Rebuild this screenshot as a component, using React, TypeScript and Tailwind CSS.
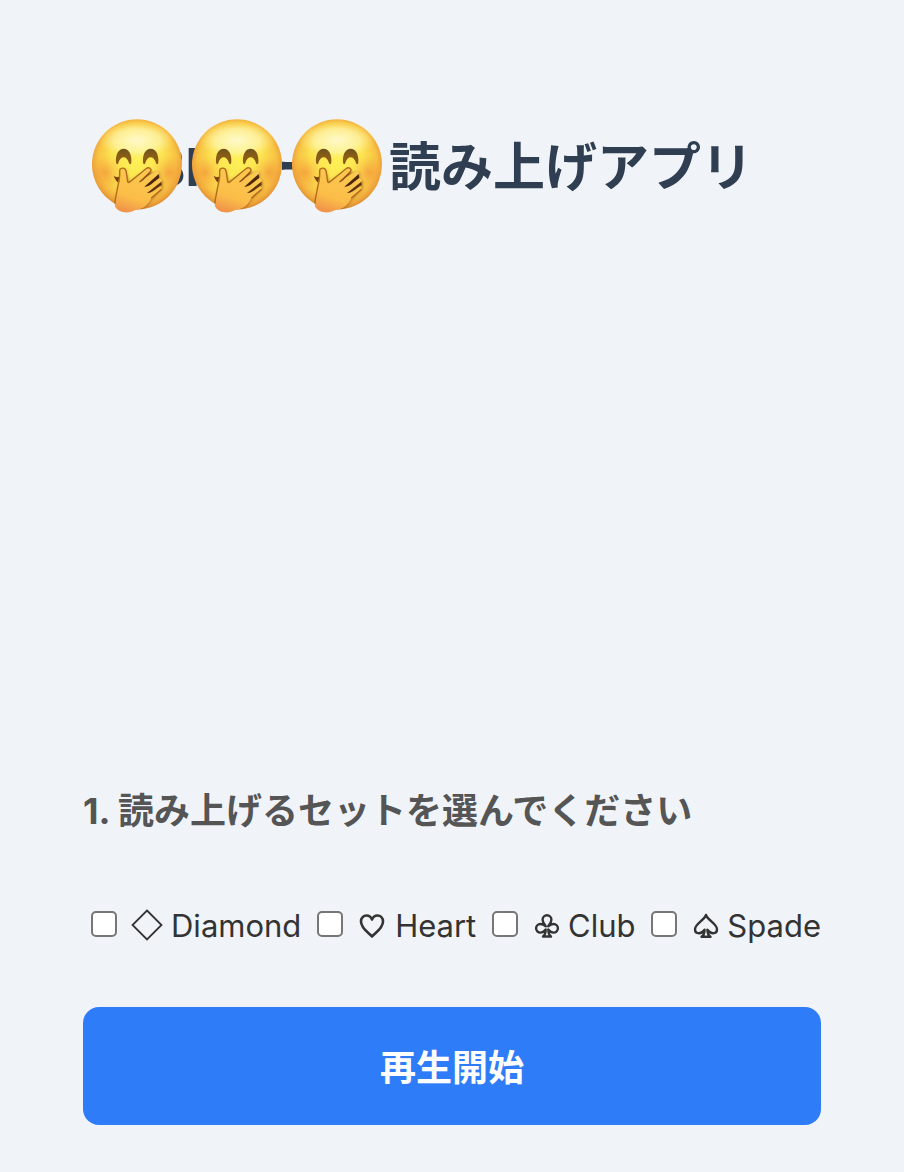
import { FC, ReactNode } from 'react'

interface CardSet {
  id: string
  name: string
  icon: ReactNode
}

const cardSets: CardSet[] = [
  {
    id: 'diamond',
    name: 'Diamond',
    icon: (
      <svg viewBox="0 0 32 32" className="ml-3.5 mr-2 mt-0.5 size-8 shrink-0" aria-hidden="true">
        <path d="M16 1.5 30.5 16 16 30.5 1.5 16Z" fill="none" stroke="currentColor" strokeWidth="1.8" />
      </svg>
    ),
  },
  {
    id: 'heart',
    name: 'Heart',
    icon: (
      <svg viewBox="0 0 26 26" className="ml-4 mr-2.5 mt-1 size-[26px] shrink-0" aria-hidden="true">
        <path
          d="M13 23.5C10 20 2 15.5 2 8.500C2 5 4.500 2.500 7.500 2.500C10 2.500 12 4 13 6.500C14 4 16 2.500 18.500 2.500C21.500 2.500 24 5 24 8.500C24 15.500 16 20 13 23.500Z"
          fill="none"
          stroke="currentColor"
          strokeWidth="2.6"
          strokeLinejoin="round"
        />
      </svg>
    ),
  },
  {
    id: 'club',
    name: 'Club',
    icon: (
      <svg viewBox="0 0 26 26" className="ml-4 mr-2 mt-1 size-[26px] shrink-0" aria-hidden="true">
        <path
          d="M11.800 13.200C10.500 11.500 8.600 9.500 8.600 6.700A4.400 4.400 0 0 1 17.400 6.700C17.400 9.500 15.500 11.500 14.200 13.200C16 11.800 17.500 11 19.600 11A4.300 4.300 0 0 1 19.600 19.600C17.300 19.600 15.500 18 14.300 16.500C14.300 20 14.800 22 17 23.500H9C11.200 22 11.700 20 11.700 16.500C10.500 18 8.700 19.600 6.400 19.600A4.300 4.300 0 0 1 6.400 11C8.500 11 10 11.800 11.800 13.200Z"
          fill="none"
          stroke="currentColor"
          strokeWidth="2.4"
          strokeLinejoin="round"
        />
      </svg>
    ),
  },
  {
    id: 'spade',
    name: 'Spade',
    icon: (
      <svg viewBox="0 0 26 26" className="ml-4 mr-2 mt-1 size-[26px] shrink-0" aria-hidden="true">
        <path
          d="M13 2C15 7.500 24 11 24 16.200C24 18.800 22.200 20.200 20 20.200C17.500 20.200 15.700 18.700 14.400 16.800C14.400 20.200 15 22.200 17.500 23.800H8.500C11 22.200 11.600 20.200 11.600 16.800C10.300 18.700 8.500 20.200 6 20.200C3.800 20.200 2 18.800 2 16.200C2 11 11 7.500 13 2Z"
          fill="none"
          stroke="currentColor"
          strokeWidth="2.4"
          strokeLinejoin="round"
        />
      </svg>
    ),
  },
]

const GiggleFace: FC = () => (
  <svg viewBox="21 25 300 288" className="h-24 w-[100px] shrink-0" aria-hidden="true">
    <use href="#giggle-face" />
  </svg>
)

const GiggleFaceDefs: FC = () => (
  <svg className="absolute size-0" aria-hidden="true">
    <defs>
      <radialGradient id="face-fill" gradientUnits="userSpaceOnUse" cx="171" cy="154" r="146">
        <stop offset="0" stopColor="#fdf056" />
        <stop offset="0.55" stopColor="#fce250" />
        <stop offset="0.8" stopColor="#f8c444" />
        <stop offset="0.93" stopColor="#eda23a" />
        <stop offset="1" stopColor="#d98a2e" />
      </radialGradient>
      <radialGradient id="face-shine">
        <stop offset="0" stopColor="#fffbd8" stopOpacity="0.9" />
        <stop offset="0.6" stopColor="#fff9b8" stopOpacity="0.65" />
        <stop offset="1" stopColor="#fff176" stopOpacity="0" />
      </radialGradient>
      <radialGradient id="cheek-fill">
        <stop offset="0" stopColor="#f08334" stopOpacity="0.55" />
        <stop offset="1" stopColor="#f59a3b" stopOpacity="0" />
      </radialGradient>
      <linearGradient id="eye-fill" x1="0" y1="0" x2="0" y2="1">
        <stop offset="0" stopColor="#6e5220" />
        <stop offset="0.5" stopColor="#8a5d14" />
        <stop offset="1" stopColor="#8a5a1c" />
      </linearGradient>
      <linearGradient id="hand-fill" gradientUnits="userSpaceOnUse" x1="185" y1="185" x2="145" y2="308">
        <stop offset="0" stopColor="#fbc850" />
        <stop offset="0.65" stopColor="#fbbd48" />
        <stop offset="1" stopColor="#f0944a" />
      </linearGradient>
      <filter id="soft" x="-20%" y="-20%" width="140%" height="140%">
        <feGaussianBlur stdDeviation="4" />
      </filter>
      <clipPath id="face-clip">
        <circle cx="171" cy="164" r="135" />
      </clipPath>
      <g id="giggle-face">
        <circle cx="171" cy="164" r="135" fill="url(#face-fill)" />
        <ellipse cx="171" cy="92" rx="116" ry="58" fill="url(#face-shine)" />
        <g clipPath="url(#face-clip)">
          <circle cx="76" cy="188" r="52" fill="url(#cheek-fill)" />
          <circle cx="266" cy="188" r="52" fill="url(#cheek-fill)" />
        </g>
        <path d="M108 158C106 134 116 117 131 117S156 134 154 158C153 165 149 166 147 160C141 137 121 137 115 160C113 166 109 165 108 158Z" fill="url(#eye-fill)" />
        <path d="M189 158C187 134 197 117 212 117S237 134 235 158C234 165 230 166 228 160C222 137 202 137 196 160C194 166 190 165 189 158Z" fill="url(#eye-fill)" />
        <path d="M101 198C107 203 116 203 122 199L119 223C112 218 104 209 101 198Z" fill="#7a430f" />
        <g clipPath="url(#face-clip)">
          <path
            d="M119 186C119 173 136 171 138 185L144 213L201 175C208 171 215 179 209 186L230 183C237 182 241 191 234 197L243 208C249 212 247 219 242 222C249 226 247 235 239 240L211 267C202 285 188 299 150 306C106 310 100 288 106 268L112 239C117 219 119 206 119 186Z"
            fill="#a8611c"
            opacity="0.8"
            filter="url(#soft)"
            transform="translate(2 5)"
          />
        </g>
        <path
          d="M119 186C118 174 134 171 138 184L143 216C145 221 149 218 153 214L198 177C207 170 217 178 211 187L192 207L225 186C235 181 241 190 235 198L209 222L235 207C244 203 249 212 242 219L216 240L235 230C243 227 248 234 243 240L215 264C203 287 190 298 166 301C145 314 116 309 106 292C101 281 109 258 111 238C114 220 120 208 119 186Z"
          fill="url(#hand-fill)"
        />
        <path
          d="M105 280C105 268 110 252 112 238C115 221 121 206 119 186C118 174 134 171 138 184L143 216C145 221 149 218 153 214L198 177C207 170 217 178 211 187"
          fill="none"
          stroke="#b06c1c"
          strokeWidth="4"
          strokeLinecap="round"
        />
        <path d="M211 184L176 218C183 219 189 212 195 206L210 191Z" fill="#8f4c12" />
        <path d="M236 193L193 231C202 233 214 225 221 218L238 204Z" fill="#4d270a" />
        <path d="M244 216L201 250C210 251 220 245 228 238L245 226Z" fill="#5e330e" />
        <path d="M243 240L215 264" fill="none" stroke="#b56718" strokeWidth="4" strokeLinecap="round" />
      </g>
    </defs>
  </svg>
)

const App: FC = () => {
  return (
    <main className="min-h-screen bg-[#f0f4f9] px-[83px] pb-[47px] pt-[130px] font-[Inter,'Noto_Sans_CJK_JP',sans-serif] text-[#333]">
      <GiggleFaceDefs />
      <header className="relative">
        <h1 className="whitespace-nowrap text-center text-[52px] font-bold leading-[76px] text-[#2f3e50]">
          BNカード&thinsp;読み上げアプリ
        </h1>
        <div className="absolute -top-3 left-1 flex">
          <GiggleFace />
          <GiggleFace />
          <GiggleFace />
        </div>
      </header>

      <section className="mt-[579px]">
        <h2 className="whitespace-nowrap text-4xl font-bold leading-[52px] text-[#555]">
          1. 読み上げるセットを選んでください
        </h2>
        <div className="mt-[65px] flex items-center justify-between pl-2">
          {cardSets.map((set) => (
            <label key={set.id} htmlFor={set.id} className="flex items-center text-[31px] leading-10">
              <input
                id={set.id}
                type="checkbox"
                className="size-[26px] shrink-0 appearance-none rounded-[5px] border-2 border-[#767676] bg-white checked:bg-[#2f7cf8]"
              />
              {set.icon}
              <span className="pt-1">{set.name}</span>
            </label>
          ))}
        </div>
        <button
          type="button"
          className="mt-[61px] w-full rounded-2xl bg-[#2f7cf8] pb-7 pt-8 text-4xl font-bold leading-[58px] text-white"
        >
          再生開始
        </button>
      </section>
    </main>
  )
}

export default App
